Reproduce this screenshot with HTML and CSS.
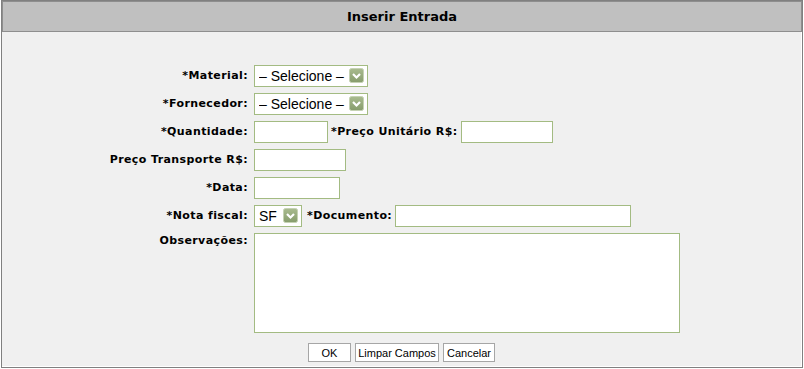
FILE: index.html
```html
<!DOCTYPE html>
<html lang="pt-BR">
<head>
  <meta charset="UTF-8">
  <title>Inserir Entrada</title>
  <link rel="stylesheet" href="styles.css">
</head>
<body>
  <div class="frame">
    <div class="header">Inserir Entrada</div>

    <div class="content">
      <form class="entry-form">
        <label class="lbl">*Material:</label>
        <div class="field">
          <span class="select-wrap">
            <select class="sel sel-wide"><option>– Selecione –</option></select>
            <svg class="arrow" width="15" height="15" viewBox="0 0 15 15">
              <defs>
                <linearGradient id="g1" x1="0" y1="0" x2="0" y2="1">
                  <stop offset="0" stop-color="#a9bb8f"/>
                  <stop offset="1" stop-color="#869c6c"/>
                </linearGradient>
              </defs>
              <rect x="0.5" y="0.5" width="14" height="14" rx="2" fill="url(#g1)" stroke="#c5d2b3"/>
              <path d="M4 6 L7.5 9.5 L11 6" fill="none" stroke="#fff" stroke-width="2.2"/>
            </svg>
          </span>
        </div>

        <label class="lbl">*Fornecedor:</label>
        <div class="field">
          <span class="select-wrap">
            <select class="sel sel-wide"><option>– Selecione –</option></select>
            <svg class="arrow" width="15" height="15" viewBox="0 0 15 15">
              <rect x="0.5" y="0.5" width="14" height="14" rx="2" fill="url(#g1)" stroke="#c5d2b3"/>
              <path d="M4 6 L7.5 9.5 L11 6" fill="none" stroke="#fff" stroke-width="2.2"/>
            </svg>
          </span>
        </div>

        <label class="lbl">*Quantidade:</label>
        <div class="field">
          <input type="text" class="txt w-qtd">
          <label class="lbl inline">*Preço Unitário R$:</label>
          <input type="text" class="txt w-preco">
        </div>

        <label class="lbl">Preço Transporte R$:</label>
        <div class="field">
          <input type="text" class="txt w-preco">
        </div>

        <label class="lbl">*Data:</label>
        <div class="field">
          <input type="text" class="txt w-data">
        </div>

        <label class="lbl">*Nota fiscal:</label>
        <div class="field">
          <span class="select-wrap">
            <select class="sel sel-small"><option>SF</option></select>
            <svg class="arrow" width="15" height="15" viewBox="0 0 15 15">
              <rect x="0.5" y="0.5" width="14" height="14" rx="2" fill="url(#g1)" stroke="#c5d2b3"/>
              <path d="M4 6 L7.5 9.5 L11 6" fill="none" stroke="#fff" stroke-width="2.2"/>
            </svg>
          </span>
          <label class="lbl inline doc">*Documento:</label>
          <input type="text" class="txt w-doc">
        </div>

        <label class="lbl top">Observações:</label>
        <div class="field">
          <textarea class="obs"></textarea>
        </div>
      </form>

      <div class="buttons">
        <button type="button" class="btn btn-ok">OK</button>
        <button type="button" class="btn btn-clear">Limpar Campos</button>
        <button type="button" class="btn btn-cancel">Cancelar</button>
      </div>
    </div>
  </div>
</body>
</html>
```

FILE: styles.css
```css
body {
  margin: 0;
  background: #fff;
  font-family: "DejaVu Sans", Verdana, sans-serif;
}
.frame {
  margin: 0 1px 1px 1px;
  border: 1px solid #808080;
  background: #f0f0f0;
}
.header {
  height: 29px;
  line-height: 29px;
  border: 1px solid #8e8e8e;
  background: #c0c0c0;
  text-align: center;
  font-size: 13px;
  font-weight: bold;
  color: #000;
}
.content {
  height: 301px;
  padding-top: 33px;
  border-right: 1px solid #fff;
  border-bottom: 1px solid #fff;
}
.entry-form {
  display: grid;
  grid-template-columns: 246px auto;
  column-gap: 6px;
  row-gap: 6px;
}
.lbl {
  font-size: 11px;
  font-weight: bold;
  letter-spacing: 0.4px;
  color: #000;
  text-align: right;
  line-height: 22px;
  white-space: nowrap;
}
.lbl.top {
  line-height: 13px;
  padding-top: 1px;
}
.lbl.inline {
  margin: 0 3px 0 3px;
}
.lbl.doc {
  margin-left: 5px;
}
.field {
  display: flex;
  align-items: flex-start;
}
.txt, .sel, .obs {
  box-sizing: border-box;
  border: 1px solid #a3bb82;
  background: #fff;
  margin: 0;
}
.txt {
  height: 22px;
}
.w-qtd { width: 74px; }
.w-preco { width: 92px; }
.w-data { width: 86px; }
.w-doc { width: 236px; }
.select-wrap {
  position: relative;
  display: inline-block;
  height: 22px;
}
.sel {
  appearance: none;
  -webkit-appearance: none;
  height: 22px;
  padding: 0 0 0 4px;
  font-family: "Liberation Sans", Arial, sans-serif;
  font-size: 14px;
  color: #000;
  border-radius: 0;
}
.sel-wide { width: 114px; }
.sel-small { width: 48px; }
.arrow {
  position: absolute;
  right: 4px;
  top: 3px;
  pointer-events: none;
}
.obs {
  width: 426px;
  height: 100px;
  resize: none;
}
.buttons {
  display: flex;
  justify-content: center;
  gap: 4px;
  margin-top: 10px;
}
.btn {
  box-sizing: border-box;
  height: 19px;
  padding: 0;
  border: 1px solid #a6a6a6;
  background: #fff;
  font-family: "Liberation Sans", Arial, sans-serif;
  font-size: 11px;
  color: #000;
}
.btn-ok { width: 43px; }
.btn-clear { width: 84px; }
.btn-cancel { width: 52px; }
```
